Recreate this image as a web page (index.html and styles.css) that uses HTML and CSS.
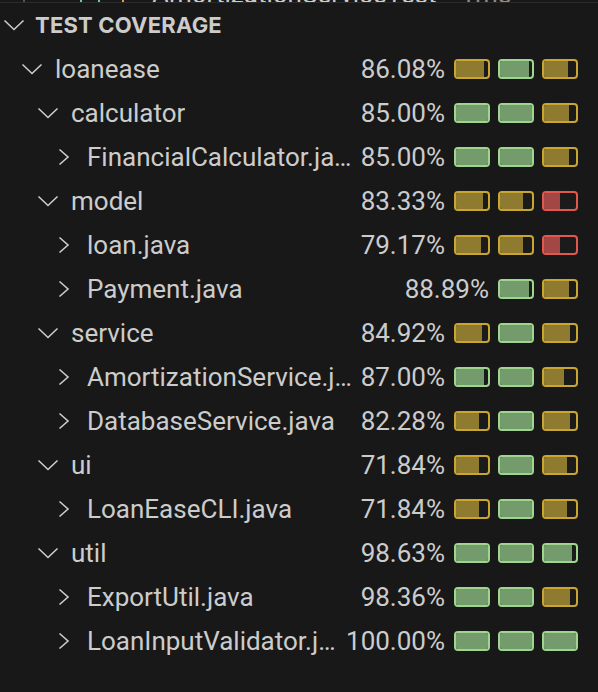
FILE: index.html
```html
<!DOCTYPE html>
<html>
<head>
<meta charset="utf-8">
<link rel="stylesheet" href="styles.css">
</head>
<body>
<div class="pane">
  <div class="topstrip"><div class="prev"><span class="mark m1"></span><span class="mark m2"></span><span class="mark m3"></span><span class="mark m4"></span><span class="pname">AmortizationServiceTest</span><span class="ptime">1ms</span></div></div>
  <div class="header">
    <span class="chev"><svg width="22" height="12" viewBox="0 0 22 12"><path d="M1.5 1.5 L11 10.5 L20.5 1.5" fill="none" stroke="#cccccc" stroke-width="1.6"/></svg></span>
    <span class="title">TEST COVERAGE</span>
  </div>
  <div class="tree" id="tree"></div>
</div>
<script>
var rows = [
  [0,'d','loanease','86.08%',[['y',88],['g',92],['y',76]]],
  [1,'d','calculator','85.00%',[['g',100],['g',100],['y',78]]],
  [2,'r','FinancialCalculator.java','85.00%',[['g',100],['g',100],['y',78]]],
  [1,'d','model','83.33%',[['y',85],['y',72],['r',50]]],
  [2,'r','loan.java','79.17%',[['y',78],['y',72],['r',50]]],
  [2,'r','Payment.java','88.89%',[['g',90],['y',78]]],
  [1,'d','service','84.92%',[['y',80],['g',100],['y',80]]],
  [2,'r','AmortizationService.java','87.00%',[['g',86],['g',100],['y',62]]],
  [2,'r','DatabaseService.java','82.28%',[['y',72],['g',100],['y',80]]],
  [1,'d','ui','71.84%',[['y',72],['g',100],['y',72]]],
  [2,'r','LoanEaseCLI.java','71.84%',[['y',72],['g',100],['y',72]]],
  [1,'d','util','98.63%',[['g',100],['g',100],['g',88]]],
  [2,'r','ExportUtil.java','98.36%',[['g',100],['g',100],['y',80]]],
  [2,'r','LoanInputValidator.java','100.00%',[['g',100],['g',100],['g',100]]]
];
var down = '<svg width="22" height="12" viewBox="0 0 22 12"><path d="M1.5 1.5 L11 10.5 L20.5 1.5" fill="none" stroke="#cccccc" stroke-width="1.6"/></svg>';
var right = '<svg width="12" height="18" viewBox="0 0 12 18"><path d="M1.5 1.5 L10 9 L1.5 16.5" fill="none" stroke="#cccccc" stroke-width="1.6"/></svg>';
var html = '';
rows.forEach(function(r){
  var bars = r[4].map(function(b){
    return '<span class="bar ' + b[0] + '"><span class="fill" style="width:' + b[1] + '%"></span></span>';
  }).join('');
  html += '<div class="row lvl' + r[0] + '">' +
    '<span class="twisty">' + (r[1]==='d' ? down : right) + '</span>' +
    '<span class="label">' + r[2] + '</span>' +
    '<span class="spacer"></span>' +
    '<span class="pct">' + r[3] + '</span>' +
    '<span class="bars">' + bars + '</span>' +
    '</div>';
});
document.getElementById('tree').innerHTML = html;
</script>
</body>
</html>
```
FILE: styles.css
```css
html, body {
  margin: 0;
  padding: 0;
  background: #181818;
}
.pane {
  width: 598px;
  height: 692px;
  overflow: hidden;
  background: #181818;
  color: #cccccc;
  font-family: Roboto, "Noto Sans", sans-serif;
}
.topstrip {
  height: 2px;
  overflow: hidden;
  border-bottom: 1px solid #2b2b2b;
}
.prev {
  margin-top: -19px;
  font-size: 26px;
  line-height: 26px;
  color: #cccccc;
  white-space: nowrap;
  display: flex;
  align-items: flex-end;
}
.mark {
  width: 2px;
  height: 8px;
  flex: none;
}
.m1 { background: #555555; margin-left: 23px; }
.m2 { background: #73c991; margin-left: 55px; }
.m3 { background: #73c991; margin-left: 16px; }
.m4 { background: #e2a03f; margin-left: 22px; }
.pname {
  margin-left: 28px;
}
.ptime {
  margin-left: 24px;
  color: #8b8b8b;
}
.header {
  height: 44px;
  display: flex;
  align-items: center;
}
.header .chev {
  width: 35px;
  display: flex;
  justify-content: center;
  padding-right: 7px;
  box-sizing: border-box;
}
.title {
  font-family: Inter, Roboto, sans-serif;
  font-weight: 700;
  font-size: 22px;
  letter-spacing: 0.2px;
}
.row {
  height: 44px;
  display: flex;
  align-items: center;
  padding-right: 20px;
  font-size: 26px;
}
.twisty {
  width: 32px;
  flex: none;
  display: flex;
  justify-content: center;
  align-items: center;
  margin-right: 7px;
}
.lvl0 { padding-left: 16px; }
.lvl1 { padding-left: 32px; }
.lvl2 { padding-left: 48px; }
.label {
  flex: 0 1 auto;
  min-width: 0;
  white-space: nowrap;
  overflow: hidden;
  text-overflow: ellipsis;
}
.spacer {
  flex: 1 1 0;
  min-width: 2px;
}
.pct {
  flex: none;
  margin-right: 9px;
}
.bars {
  flex: none;
  display: flex;
  gap: 8px;
}
.bar {
  width: 36px;
  height: 20px;
  box-sizing: border-box;
  border: 2px solid;
  border-radius: 4px;
  overflow: hidden;
  display: flex;
  background: #1b1b1b;
}
.fill {
  height: 100%;
}
.bar.y { border-color: #c9a632; }
.bar.y .fill { background: #8e7b2f; }
.bar.g { border-color: #9fd58e; }
.bar.g .fill { background: #739b6b; }
.bar.r { border-color: #e2584f; }
.bar.r .fill { background: #a34744; }
```
